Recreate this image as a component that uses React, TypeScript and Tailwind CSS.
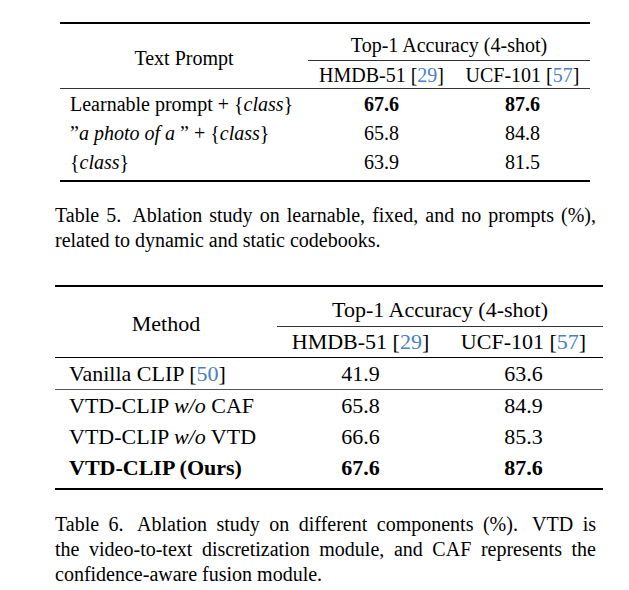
import React from "react";

const F = "font-['Liberation_Serif',serif] font-['Liberation_Serif',serif]!";

function Cite({ n }: { n: number }) {
  return (
    <span className={F}>
      [<span className={"text-[#4a80c4] " + F}>{n}</span>]
    </span>
  );
}

function Cls() {
  return (
    <span className={F}>
      &#123;<span className={"italic " + F}>class</span>&#125;
    </span>
  );
}

function Gap() {
  return <span className="inline-block w-[5px]" />;
}

const rows5 = [
  { id: "learn", a: "67.6", b: "87.6", bold: true },
  { id: "photo", a: "65.8", b: "84.8", bold: false },
  { id: "cls", a: "63.9", b: "81.5", bold: false },
];

const rows6 = [
  { id: "caf", a: "65.8", b: "84.9", bold: false },
  { id: "vtd", a: "66.6", b: "85.3", bold: false },
  { id: "ours", a: "67.6", b: "87.6", bold: true },
];

function Label5({ id }: { id: string }) {
  if (id === "learn") return <>Learnable prompt + <Cls /></>;
  if (id === "photo")
    return (
      <>
        &rdquo;<span className={"italic " + F}>a photo of a</span> &rdquo; + <Cls />
      </>
    );
  return <Cls />;
}

function Label6({ id }: { id: string }) {
  if (id === "caf") return <>VTD-CLIP <span className={"italic " + F}>w/o</span> CAF</>;
  if (id === "vtd") return <>VTD-CLIP <span className={"italic " + F}>w/o</span> VTD</>;
  return <>VTD-CLIP (Ours)</>;
}

export default function App() {
  return (
    <div className={"min-h-screen w-[629px] bg-white text-black " + F}>
      <div className={"ml-[55px] w-[548px] pt-[22px] " + F}>
        {/* Table 5 */}
        <div className={"ml-[5px] w-[530px] text-[20px] leading-[24px] " + F}>
          <div className="h-[2px] bg-black" />
          <div className="flex h-[64px]">
            <div className={"w-[248px] flex items-center justify-center pt-[4px] " + F}>Text Prompt</div>
            <div className="flex-1 flex flex-col">
              <div className={"h-[36px] pt-[6px] flex items-center justify-center " + F}>Top-1 Accuracy (4-shot)</div>
              <div className="h-px bg-[#333]" />
              <div className="flex-1 flex">
                <div className={"w-[147px] flex items-center justify-center " + F}>
                  HMDB-51&nbsp;<Cite n={29} />
                </div>
                <div className={"flex-1 flex items-center justify-center " + F}>
                  UCF-101&nbsp;<Cite n={57} />
                </div>
              </div>
            </div>
          </div>
          <div className="h-px bg-[#333]" />
          {rows5.map((r) => (
            <div key={r.id} className={"flex h-[29px] items-center " + F}>
              <div className={"w-[248px] pl-[10px] whitespace-nowrap " + F}>
                <Label5 id={r.id} />
              </div>
              <div className={(r.bold ? "w-[147px] text-center font-bold " : "w-[147px] text-center ") + F}>{r.a}</div>
              <div className={(r.bold ? "flex-1 text-center font-bold " : "flex-1 text-center ") + F}>{r.b}</div>
            </div>
          ))}
          <div className="h-[4px]" />
          <div className="h-[2px] bg-black" />
        </div>

        {/* Caption 5 */}
        <div className={"mt-[21px] w-[541px] text-[20px] leading-[25px] " + F}>
          <div className={"text-justify [text-align-last:justify] whitespace-nowrap " + F}>
            Table 5.<Gap /> Ablation study on learnable, fixed, and no prompts (%),
          </div>
          <div className={F}>related to dynamic and static codebooks.</div>
        </div>

        {/* Table 6 */}
        <div className={"mt-[32px] w-[548px] text-[22px] leading-[26px] " + F}>
          <div className="h-[2px] bg-black" />
          <div className="flex h-[70px]">
            <div className={"w-[222px] flex items-center justify-center pt-[4px] " + F}>Method</div>
            <div className="flex-1 flex flex-col">
              <div className={"h-[39px] pt-[7px] flex items-center justify-center " + F}>Top-1 Accuracy (4-shot)</div>
              <div className="h-px bg-[#333]" />
              <div className="flex-1 flex">
                <div className={"w-[167px] flex items-center justify-center " + F}>
                  HMDB-51&nbsp;<Cite n={29} />
                </div>
                <div className={"flex-1 flex items-center justify-center " + F}>
                  UCF-101&nbsp;<Cite n={57} />
                </div>
              </div>
            </div>
          </div>
          <div className="h-px bg-black" />
          <div className={"flex h-[31px] items-center " + F}>
            <div className={"w-[222px] pl-[14px] whitespace-nowrap " + F}>
              Vanilla CLIP <Cite n={50} />
            </div>
            <div className={"w-[167px] text-center " + F}>41.9</div>
            <div className={"flex-1 text-center " + F}>63.6</div>
          </div>
          <div className="h-px bg-[#555]" />
          {rows6.map((r) => (
            <div key={r.id} className={(r.bold ? "flex h-[31px] items-center font-bold " : "flex h-[31px] items-center ") + F}>
              <div className={"w-[222px] pl-[14px] whitespace-nowrap " + F}>
                <Label6 id={r.id} />
              </div>
              <div className={"w-[167px] text-center " + F}>{r.a}</div>
              <div className={"flex-1 text-center " + F}>{r.b}</div>
            </div>
          ))}
          <div className="h-[5px]" />
          <div className="h-[2px] bg-black" />
        </div>

        {/* Caption 6 */}
        <div className={"mt-[22px] w-[541px] text-[20px] leading-[25px] " + F}>
          <div className={"text-justify [text-align-last:justify] whitespace-nowrap " + F}>
            Table 6.<Gap /> Ablation study on different components (%).<Gap /> VTD is
          </div>
          <div className={"text-justify [text-align-last:justify] whitespace-nowrap " + F}>
            the video-to-text discretization module, and CAF represents the
          </div>
          <div className={F}>confidence-aware fusion module.</div>
        </div>
      </div>
    </div>
  );
}
